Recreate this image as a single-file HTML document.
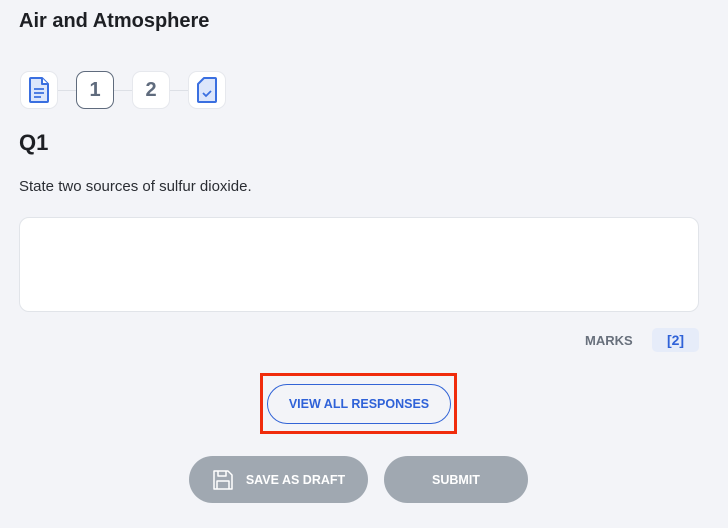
<!DOCTYPE html>
<html><head><style>
*{margin:0;padding:0;box-sizing:border-box}
body{width:728px;height:528px;background:#f3f4f8;font-family:"Liberation Sans",sans-serif;position:relative;overflow:hidden;color:#1d1f24}
.a{position:absolute}
.step{position:absolute;top:71px;width:38px;height:38px;background:#fff;border-radius:9px;border:1px solid #e6e8ed;display:flex;align-items:center;justify-content:center;font-weight:bold;font-size:20px;color:#5f6b7d}
.line{position:absolute;top:90px;height:1px;background:#dde0e6}
.btn{position:absolute;border-radius:24px;background:#a0a8b1;color:#fff;font-weight:bold;font-size:12.5px;display:flex;align-items:center;justify-content:center}
</style></head><body>
<div class="a" style="left:19px;top:10px;font-size:20px;font-weight:bold">Air and Atmosphere</div>
<div class="line" style="left:58px;width:18px"></div>
<div class="line" style="left:114px;width:18px"></div>
<div class="line" style="left:170px;width:18px"></div>
<div class="step" style="left:20px"><svg width="22" height="28" viewBox="0 0 22 28"><path d="M2 3q0-1 1-1h11l6 6v17q0 1-1 1H3q-1 0-1-1z" fill="#dce6fb" stroke="#3a6fe0" stroke-width="2" stroke-linejoin="round"/><path d="M14 2v6h6" fill="#fff" stroke="#3a6fe0" stroke-width="2" stroke-linejoin="round"/><path d="M6 13h10M6 17h10M6 21h7" stroke="#3a6fe0" stroke-width="1.8"/></svg></div>
<div class="step" style="left:76px;border:1.5px solid #5f6b7d">1</div>
<div class="step" style="left:132px">2</div>
<div class="step" style="left:188px"><svg width="22" height="28" viewBox="0 0 22 28"><path d="M8 2h11q1 0 1 1v22q0 1-1 1H3q-1 0-1-1V8z" fill="#dce6fb" stroke="#3a6fe0" stroke-width="2" stroke-linejoin="round"/><path d="M7 17l3 3 5-5" fill="none" stroke="#3a6fe0" stroke-width="1.8"/></svg></div>
<div class="a" style="left:19px;top:130px;font-size:22px;font-weight:bold">Q1</div>
<div class="a" style="left:19px;top:178px;font-size:15px;color:#2a2d33">State two sources of sulfur dioxide.</div>
<div class="a" style="left:19px;top:217px;width:680px;height:95px;background:#fff;border:1px solid #e1e4e9;border-radius:10px"></div>
<div class="a" style="left:585px;top:333px;font-size:13px;font-weight:bold;color:#68707c">MARKS</div>
<div class="a" style="left:652px;top:328px;width:47px;height:24px;background:#e6ecf9;border-radius:5px;color:#2f62d8;font-weight:bold;font-size:14px;text-align:center;line-height:24px">[2]</div>
<div class="a" style="left:260px;top:373px;width:197px;height:61px;border:3px solid #f02c0c"></div>
<div class="a" style="left:267px;top:384px;width:184px;height:40px;border:1px solid #3264d6;border-radius:20px;color:#2f62d8;font-weight:bold;font-size:12.5px;text-align:center;line-height:38px">VIEW ALL RESPONSES</div>
<div class="btn" style="left:189px;top:456px;width:179px;height:47px"><svg width="22" height="22" viewBox="0 0 22 22" style="margin-right:12px"><path d="M2 2h14l4 4v14H2z M6 2v5h8V2 M5 20v-8h12v8" fill="none" stroke="#fff" stroke-width="1.5" stroke-linejoin="round"/></svg>SAVE AS DRAFT</div>
<div class="btn" style="left:384px;top:456px;width:144px;height:47px">SUBMIT</div>
</body></html>
